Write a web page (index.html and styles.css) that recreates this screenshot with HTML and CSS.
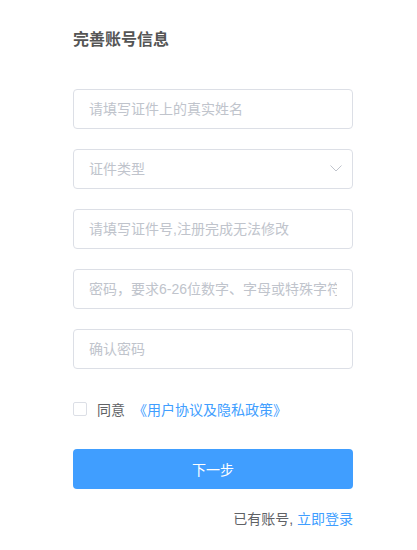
FILE: index.html
```html
<!DOCTYPE html>
<html lang="zh-CN">
<head>
  <meta charset="UTF-8" />
  <title>完善账号信息</title>
  <link rel="stylesheet" href="styles.css">
</head>
<body>
  <div class="form">
    <h2 class="title">完善账号信息</h2>

    <div class="field">
      <input type="text" placeholder="请填写证件上的真实姓名" />
    </div>

    <div class="field select">
      <input type="text" placeholder="证件类型" readonly />
      <svg class="arrow" width="14" height="14" viewBox="0 0 14 14">
        <path d="M1.5 4.5 L7 10 L12.5 4.5" fill="none" stroke="#c0c4cc" stroke-width="1" />
      </svg>
    </div>

    <div class="field">
      <input type="text" placeholder="请填写证件号,注册完成无法修改" />
    </div>

    <div class="field">
      <input type="password" placeholder="密码，要求6-26位数字、字母或特殊字符" />
    </div>

    <div class="field">
      <input type="password" placeholder="确认密码" />
    </div>

    <label class="agree">
      <span class="check"></span>
      <span class="agree-text">同意</span>
      <a href="#" class="link">《用户协议及隐私政策》</a>
    </label>

    <button class="submit">下一步</button>

    <p class="login">已有账号, <a href="#" class="link">立即登录</a></p>
  </div>
</body>
</html>
```

FILE: styles.css
```css
body {
  margin: 0;
  background: #fff;
  font-family: "Liberation Sans", "Noto Sans CJK SC", sans-serif;
  color: #606266;
}

.form {
  width: 280px;
  margin-left: 73px;
  padding-top: 28px;
}

.title {
  margin: 0 0 37px;
  font-size: 16px;
  line-height: 24px;
  font-weight: bold;
  color: #555;
}

.field {
  position: relative;
  margin-bottom: 20px;
}

.field input {
  display: block;
  box-sizing: border-box;
  width: 100%;
  height: 40px;
  padding: 0 15px;
  border: 1px solid #dcdfe6;
  border-radius: 4px;
  font-family: inherit;
  font-size: 14px;
  color: #606266;
  outline: none;
  background: #fff;
}

.field input::placeholder {
  color: #c0c4cc;
}

.select input {
  padding-right: 35px;
  cursor: pointer;
}

.arrow {
  position: absolute;
  right: 10px;
  top: 12px;
}

.agree {
  display: flex;
  align-items: center;
  height: 20px;
  margin-top: 30px;
  font-size: 14px;
}

.check {
  box-sizing: border-box;
  width: 14px;
  height: 14px;
  border: 1px solid #dcdfe6;
  border-radius: 2px;
  margin-right: 10px;
}

.agree-text {
  color: #606266;
  margin-right: 8px;
}

.link {
  color: #409eff;
  text-decoration: none;
}

.submit {
  display: block;
  width: 100%;
  height: 40px;
  margin-top: 30px;
  border: none;
  border-radius: 4px;
  background: #409eff;
  color: #fff;
  font-family: inherit;
  font-size: 14px;
  cursor: pointer;
}

.login {
  margin: 20px 0 0;
  text-align: right;
  font-size: 14px;
  line-height: 20px;
  color: #606266;
}
```
